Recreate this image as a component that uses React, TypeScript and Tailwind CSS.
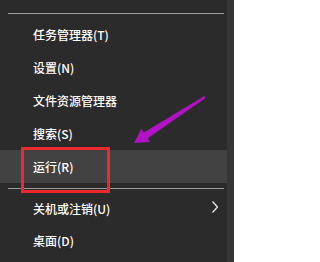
const items = [
  { label: '任务管理器(T)' },
  { label: '设置(N)' },
  { label: '文件资源管理器' },
  { label: '搜索(S)' },
  { label: '运行(R)', active: true },
];

const Separator = () => (
  <div className="pt-[5px] pb-[4px] pl-[8px] pr-[3px]">
    <div className="h-px bg-[#9b9b9b]" />
  </div>
);

export default function App() {
  return (
    <div
      className="relative flex h-[262px] w-[234px] overflow-hidden bg-[#2b2b2b] text-[12px] font-medium text-white"
      style={{ fontFamily: '"Noto Sans CJK SC", "Noto Sans", sans-serif' }}
    >
      <div className="flex w-[227px] flex-col pt-[8px]">
        <Separator />
        {items.map((it) => (
          <div
            key={it.label}
            className={`flex h-[33px] items-center pl-[33px] ${it.active ? 'bg-[#424242]' : ''}`}
          >
            {it.label}
          </div>
        ))}
        <Separator />
        <div className="flex h-[32px] items-center pl-[33px] pr-[9px]">
          <span>关机或注销(U)</span>
          <svg className="mb-[5px] ml-auto" width="6" height="12" viewBox="0 0 6 12">
            <path d="M0.5 0.5 L5.5 6 L0.5 11.5" fill="none" stroke="#e6e6e6" strokeWidth="1.3" />
          </svg>
        </div>
        <div className="flex h-[32px] items-center pl-[33px]">桌面(D)</div>
      </div>
      <div className="flex-1 bg-[#363636]" />

      {/* annotation: red box round 运行 */}
      <div className="pointer-events-none absolute left-[21px] top-[147px] h-[46px] w-[89px] border-[3px] border-[#ec2a2e]" />

      {/* annotation: purple arrow */}
      <svg className="pointer-events-none absolute inset-0" width="234" height="262" viewBox="0 0 234 262">
        <polygon
          points="204.35,96 143.85,132.5 141.4,128.7 134,143 150.1,142.1 147.65,138.3 205.65,98"
          fill="#b012c4"
        />
      </svg>
    </div>
  );
}
